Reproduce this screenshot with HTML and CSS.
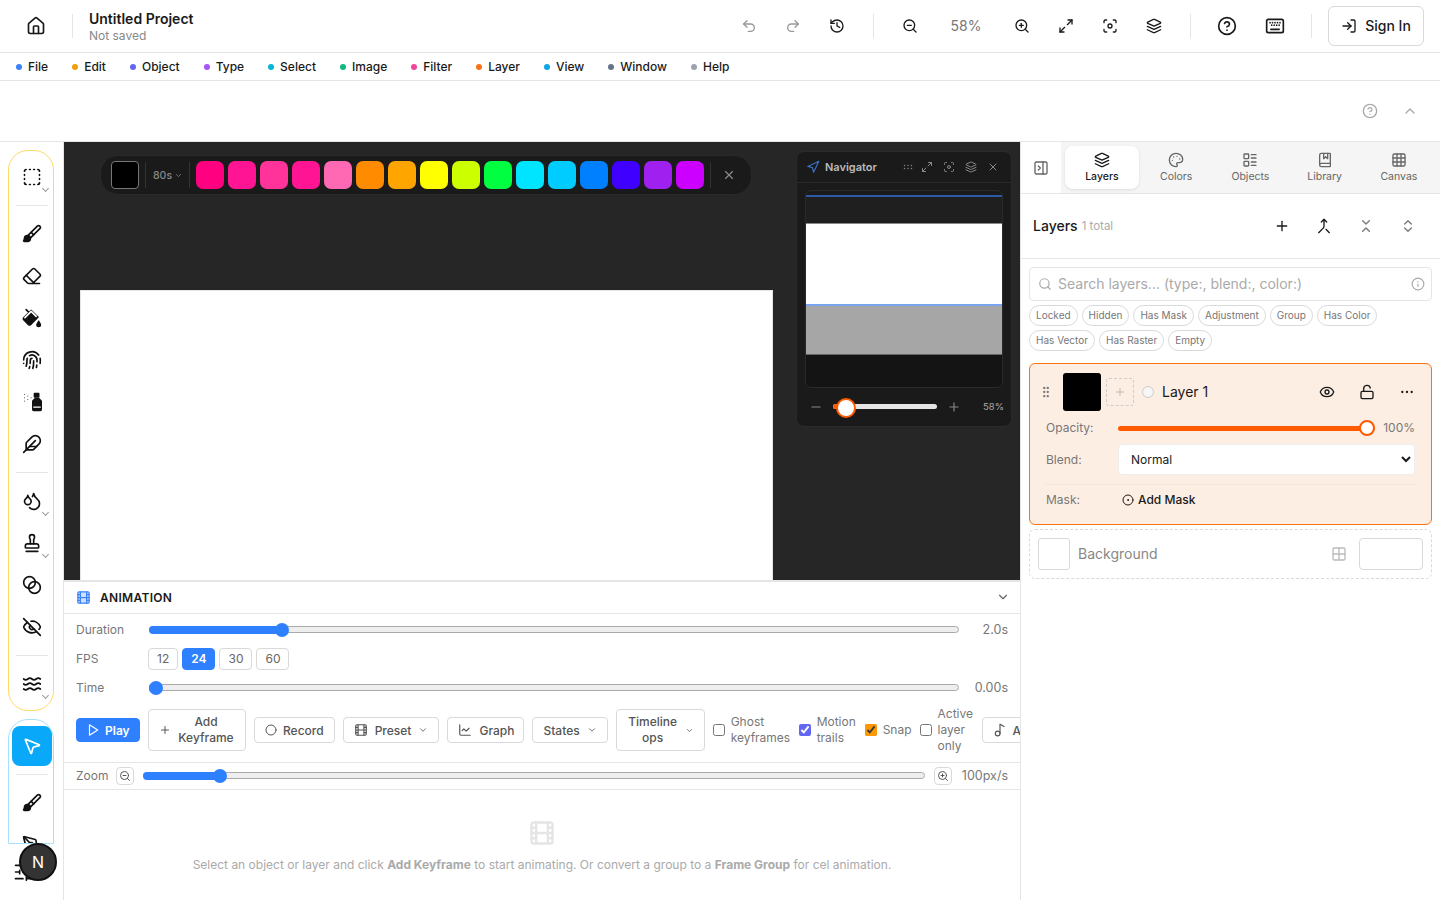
FILE: index.html
```html
<!DOCTYPE html>
<html lang="en">
<head>
    <meta charset="UTF-8">
    <title>Untitled Project</title>
    <link rel="stylesheet" href="styles.css">
</head>
<body>

<!-- icon sprite -->
<svg class="sprite" xmlns="http://www.w3.org/2000/svg">
    <symbol id="home" viewBox="0 0 24 24"><path d="M15 21v-8a1 1 0 0 0-1-1h-4a1 1 0 0 0-1 1v8"/><path d="M3 10a2 2 0 0 1 .709-1.528l7-5.999a2 2 0 0 1 2.582 0l7 5.999A2 2 0 0 1 21 10v9a2 2 0 0 1-2 2H5a2 2 0 0 1-2-2z"/></symbol>
    <symbol id="undo" viewBox="0 0 24 24"><path d="M9 14 4 9l5-5"/><path d="M4 9h10.5a5.5 5.5 0 0 1 0 11H11"/></symbol>
    <symbol id="redo" viewBox="0 0 24 24"><path d="m15 14 5-5-5-5"/><path d="M20 9H9.5a5.5 5.5 0 0 0 0 11H13"/></symbol>
    <symbol id="history" viewBox="0 0 24 24"><path d="M3 12a9 9 0 1 0 9-9 9.75 9.75 0 0 0-6.74 2.74L3 8"/><path d="M3 3v5h5"/><path d="M12 7v5l4 2"/></symbol>
    <symbol id="zoom-out" viewBox="0 0 24 24"><circle cx="11" cy="11" r="8"/><path d="m21 21-4.35-4.35"/><path d="M8 11h6"/></symbol>
    <symbol id="zoom-in" viewBox="0 0 24 24"><circle cx="11" cy="11" r="8"/><path d="m21 21-4.35-4.35"/><path d="M8 11h6"/><path d="M11 8v6"/></symbol>
    <symbol id="expand" viewBox="0 0 24 24"><path d="M15 3h6v6"/><path d="m21 3-7 7"/><path d="m3 21 7-7"/><path d="M9 21H3v-6"/></symbol>
    <symbol id="scan" viewBox="0 0 24 24"><path d="M3 7V5a2 2 0 0 1 2-2h2"/><path d="M17 3h2a2 2 0 0 1 2 2v2"/><path d="M21 17v2a2 2 0 0 1-2 2h-2"/><path d="M7 21H5a2 2 0 0 1-2-2v-2"/><circle cx="12" cy="12" r="3"/></symbol>
    <symbol id="layers" viewBox="0 0 24 24"><path d="m12.83 2.18a2 2 0 0 0-1.66 0L2.6 6.08a1 1 0 0 0 0 1.83l8.58 3.91a2 2 0 0 0 1.66 0l8.58-3.9a1 1 0 0 0 0-1.83Z"/><path d="m22 17.65-9.17 4.16a2 2 0 0 1-1.66 0L2 17.65"/><path d="m22 12.65-9.17 4.16a2 2 0 0 1-1.66 0L2 12.65"/></symbol>
    <symbol id="help" viewBox="0 0 24 24"><circle cx="12" cy="12" r="10"/><path d="M9.09 9a3 3 0 0 1 5.83 1c0 2-3 3-3 3"/><path d="M12 17h.01"/></symbol>
    <symbol id="keyboard" viewBox="0 0 24 24"><rect x="2" y="4" width="20" height="16" rx="2"/><path d="M6 8h.01M9 8h.01M12 8h.01M15 8h.01M18 8h.01M8 11h.01M11 11h.01M14 11h.01M17 11h.01M7 16h10"/></symbol>
    <symbol id="login" viewBox="0 0 24 24"><path d="m10 17 5-5-5-5"/><path d="M15 12H3"/><path d="M15 3h4a2 2 0 0 1 2 2v14a2 2 0 0 1-2 2h-4"/></symbol>
    <symbol id="chev-up" viewBox="0 0 24 24"><path d="m18 15-6-6-6 6"/></symbol>
    <symbol id="chev-down" viewBox="0 0 24 24"><path d="m6 9 6 6 6-6"/></symbol>
    <symbol id="select" viewBox="0 0 24 24"><path d="M5 3a2 2 0 0 0-2 2"/><path d="M19 3a2 2 0 0 1 2 2"/><path d="M21 19a2 2 0 0 1-2 2"/><path d="M5 21a2 2 0 0 1-2-2"/><path d="M9 3h1M9 21h1M14 3h1M14 21h1M3 9v1M21 9v1M3 14v1M21 14v1"/></symbol>
    <symbol id="brush" viewBox="0 0 24 24"><path d="m11 10 3 3"/><path fill="currentColor" d="M6.5 21A3.5 3.5 0 1 0 3 17.5a2.62 2.62 0 0 1-.708 1.792A1 1 0 0 0 3 21z"/><path d="M9.969 17.031 21.378 5.624a1 1 0 0 0-3.002-3.002L6.967 14.031"/></symbol>
    <symbol id="eraser" viewBox="0 0 24 24"><path d="M21 21H8a2 2 0 0 1-1.42-.587l-3.994-3.999a2 2 0 0 1 0-2.828l10-10a2 2 0 0 1 2.829 0l5.999 6a2 2 0 0 1 0 2.828L12.834 21"/><path d="m5.082 11.09 8.828 8.828"/></symbol>
    <symbol id="bucket" viewBox="0 0 24 24"><path fill="currentColor" d="m19 11-8-8-8.6 8.6a2 2 0 0 0 0 2.8l5.2 5.2c.8.8 2 .8 2.8 0L19 11Z"/><path d="m5 2 5 5"/><path stroke="#fff" d="M3.5 11.5 11 4l6 6"/><path fill="currentColor" d="M22 20a2 2 0 1 1-4 0c0-1.6 1.7-2.4 2-4 .3 1.6 2 2.4 2 4Z"/></symbol>
    <symbol id="fingerprint" viewBox="0 0 24 24"><path d="M12 10a2 2 0 0 0-2 2c0 1.02-.1 2.51-.26 4"/><path d="M14 13.12c0 2.38 0 6.38-1 8.88"/><path d="M17.29 21.02c.12-.6.43-2.3.5-3.02"/><path d="M2 12a10 10 0 0 1 18-6"/><path d="M2 16h.01"/><path d="M21.8 16c.2-2 .131-5.354 0-6"/><path d="M5 19.5C5.5 18 6 15 6 12a6 6 0 0 1 .34-2"/><path d="M8.65 22c.21-.66.45-1.32.57-2"/><path d="M9 6.8a6 6 0 0 1 9 5.2v2"/></symbol>
    <symbol id="spray" viewBox="0 0 24 24"><path stroke-width="1" d="M3 3h.01M7 5h.01M11 7h.01M3 7h.01M7 9h.01M3 11h.01"/><rect x="15" y="2" width="5" height="4" fill="currentColor"/><path fill="currentColor" d="m20 8 3 3v10c0 .6-.4 1-1 1h-8c-.6 0-1-.4-1-1V11l3-3z"/><path stroke="#fff" stroke-width="1.5" d="M14 18h8"/></symbol>
    <symbol id="feather" viewBox="0 0 24 24"><path d="M12.67 19a2 2 0 0 0 1.416-.588l6.154-6.172a6 6 0 0 0-8.49-8.49L5.586 9.914A2 2 0 0 0 5 11.328V18a1 1 0 0 0 1 1z"/><path d="M16 8 2 22"/><path d="M17.5 15H9"/></symbol>
    <symbol id="droplets" viewBox="0 0 24 24"><path d="M7 16.3c2.2 0 4-1.83 4-4.05 0-1.16-.57-2.26-1.71-3.19S7.29 6.75 7 5.3c-.29 1.45-1.14 2.84-2.29 3.76S3 11.1 3 12.25c0 2.22 1.8 4.05 4 4.05z"/><path d="M12.56 6.6A10.97 10.97 0 0 0 14 3.02c.5 2.5 2 4.9 4 6.5s3 3.5 3 5.5a6.98 6.98 0 0 1-11.91 4.97"/></symbol>
    <symbol id="stamp" viewBox="0 0 24 24"><path d="M5 22h14"/><path d="M19.27 13.73A2.5 2.5 0 0 0 17.5 13h-11A2.5 2.5 0 0 0 4 15.5V17a1 1 0 0 0 1 1h14a1 1 0 0 0 1-1v-1.5c0-.66-.26-1.3-.73-1.77Z"/><path d="M14 13V8.5C14 7 15 7 15 5a3 3 0 0 0-3-3c-1.66 0-3 1-3 3s1 2 1 3.5V13"/></symbol>
    <symbol id="blend" viewBox="0 0 24 24"><circle cx="9" cy="9" r="7"/><circle cx="15" cy="15" r="7"/></symbol>
    <symbol id="eye-off" viewBox="0 0 24 24"><path d="M10.733 5.076a10.744 10.744 0 0 1 11.205 6.575 1 1 0 0 1 0 .696 10.747 10.747 0 0 1-1.444 2.49"/><path d="M14.084 14.158a3 3 0 0 1-4.242-4.242"/><path d="M17.479 17.499a10.75 10.75 0 0 1-15.417-5.151 1 1 0 0 1 0-.696 10.75 10.75 0 0 1 4.446-5.143"/><path d="m2 2 20 20"/></symbol>
    <symbol id="waves" viewBox="0 0 24 24"><path d="M2 6c.6.5 1.2 1 2.5 1C7 7 7 5 9.5 5c2.6 0 2.4 2 5 2 2.5 0 2.5-2 5-2 1.3 0 1.9.5 2.5 1"/><path d="M2 12c.6.5 1.2 1 2.5 1 2.5 0 2.5-2 5-2 2.6 0 2.4 2 5 2 2.5 0 2.5-2 5-2 1.3 0 1.9.5 2.5 1"/><path d="M2 18c.6.5 1.2 1 2.5 1 2.5 0 2.5-2 5-2 2.6 0 2.4 2 5 2 2.5 0 2.5-2 5-2 1.3 0 1.9.5 2.5 1"/></symbol>
    <symbol id="pointer" viewBox="0 0 24 24"><path d="M4.037 4.688a.495.495 0 0 1 .651-.651l16 6.5a.5.5 0 0 1-.063.947l-6.124 1.58a2 2 0 0 0-1.438 1.435l-1.579 6.126a.5.5 0 0 1-.947.063z"/></symbol>
    <symbol id="pen" viewBox="0 0 24 24"><path d="M15.707 21.293a1 1 0 0 1-1.414 0l-1.586-1.586a1 1 0 0 1 0-1.414l5.586-5.586a1 1 0 0 1 1.414 0l1.586 1.586a1 1 0 0 1 0 1.414z"/><path d="m18 13-1.375-6.874a1 1 0 0 0-.746-.776L3.235 2.028a1 1 0 0 0-1.207 1.207L5.35 15.879a1 1 0 0 0 .776.746L13 18"/><path d="m2.3 2.3 7.286 7.286"/><circle cx="11" cy="11" r="2"/></symbol>
    <symbol id="sliders" viewBox="0 0 24 24"><path d="M21 4h-7M10 4H3M21 12h-9M8 12H3M21 20h-5M12 20H3M14 2v4M8 10v4M16 18v4"/></symbol>
    <symbol id="x" viewBox="0 0 24 24"><path d="M18 6 6 18"/><path d="m6 6 12 12"/></symbol>
    <symbol id="nav" viewBox="0 0 24 24"><polygon points="3 11 22 2 13 21 11 13 3 11"/></symbol>
    <symbol id="grip-h" viewBox="0 0 24 24"><path d="M5 9h.01M12 9h.01M19 9h.01M5 15h.01M12 15h.01M19 15h.01"/></symbol>
    <symbol id="grip-v" viewBox="0 0 24 24"><path d="M9 5h.01M15 5h.01M9 12h.01M15 12h.01M9 19h.01M15 19h.01"/></symbol>
    <symbol id="minus" viewBox="0 0 24 24"><path d="M5 12h14"/></symbol>
    <symbol id="plus" viewBox="0 0 24 24"><path d="M5 12h14"/><path d="M12 5v14"/></symbol>
    <symbol id="panel" viewBox="0 0 24 24"><rect x="3" y="3" width="18" height="18" rx="2"/><path d="M15 3v18"/><path d="m8 9 3 3-3 3"/></symbol>
    <symbol id="palette" viewBox="0 0 24 24"><path d="M12 22a1 1 0 0 1 0-20 10 9 0 0 1 10 9 5 5 0 0 1-5 5h-2.25a1.75 1.75 0 0 0-1.4 2.8l.3.4a1.75 1.75 0 0 1-1.4 2.8z"/><path d="M13.5 6.5h.01M17.5 10.5h.01M6.5 12.5h.01M8.5 7.5h.01"/></symbol>
    <symbol id="objects" viewBox="0 0 24 24"><rect x="3" y="3" width="7" height="7" rx="1"/><rect x="3" y="14" width="7" height="7" rx="1"/><path d="M14 4h7M14 9h7M14 15h7M14 20h7"/></symbol>
    <symbol id="library" viewBox="0 0 24 24"><path d="M10 2v8l3-3 3 3V2"/><path d="M4 19.5v-15A2.5 2.5 0 0 1 6.5 2H19a1 1 0 0 1 1 1v18a1 1 0 0 1-1 1H6.5a1 1 0 0 1 0-5H20"/></symbol>
    <symbol id="grid3" viewBox="0 0 24 24"><rect x="3" y="3" width="18" height="18" rx="2"/><path d="M3 9h18M3 15h18M9 3v18M15 3v18"/></symbol>
    <symbol id="grid2" viewBox="0 0 24 24"><rect x="3" y="3" width="18" height="18" rx="2"/><path d="M12 3v18M3 12h18"/></symbol>
    <symbol id="merge" viewBox="0 0 24 24"><path d="m8 6 4-4 4 4"/><path d="M12 2v10.3a4 4 0 0 1-1.172 2.872L4 22"/><path d="m20 22-5-5"/></symbol>
    <symbol id="collapse" viewBox="0 0 24 24"><path d="m7 20 5-5 5 5"/><path d="m7 4 5 5 5-5"/></symbol>
    <symbol id="updown" viewBox="0 0 24 24"><path d="m7 15 5 5 5-5"/><path d="m7 9 5-5 5 5"/></symbol>
    <symbol id="search" viewBox="0 0 24 24"><circle cx="11" cy="11" r="8"/><path d="m21 21-4.3-4.3"/></symbol>
    <symbol id="info" viewBox="0 0 24 24"><circle cx="12" cy="12" r="10"/><path d="M12 16v-4"/><path d="M12 8h.01"/></symbol>
    <symbol id="eye" viewBox="0 0 24 24"><path d="M2.062 12.348a1 1 0 0 1 0-.696 10.75 10.75 0 0 1 19.876 0 1 1 0 0 1 0 .696 10.75 10.75 0 0 1-19.876 0"/><circle cx="12" cy="12" r="3"/></symbol>
    <symbol id="unlock" viewBox="0 0 24 24"><rect x="3" y="11" width="18" height="11" rx="2"/><path d="M7 11V7a5 5 0 0 1 9.9-1"/></symbol>
    <symbol id="more" viewBox="0 0 24 24"><path d="M5 12h.01M12 12h.01M19 12h.01"/></symbol>
    <symbol id="circle-dot" viewBox="0 0 24 24"><circle cx="12" cy="12" r="10"/><circle cx="12" cy="12" r="1"/></symbol>
    <symbol id="film" viewBox="0 0 24 24"><rect x="3" y="3" width="18" height="18" rx="2"/><path d="M7 3v18M3 7.5h4M3 12h18M3 16.5h4M17 3v18M17 7.5h4M17 16.5h4"/></symbol>
    <symbol id="play" viewBox="0 0 24 24"><polygon points="6 3 20 12 6 21 6 3"/></symbol>
    <symbol id="circle" viewBox="0 0 24 24"><circle cx="12" cy="12" r="10"/></symbol>
    <symbol id="chart" viewBox="0 0 24 24"><path d="M3 3v16a2 2 0 0 0 2 2h16"/><path d="m19 9-5 5-4-4-3 3"/></symbol>
    <symbol id="music" viewBox="0 0 24 24"><circle cx="8" cy="18" r="4"/><path d="M12 18V2l7 4"/></symbol>
</svg>

<header class="topbar">
    <a class="home"><svg class="ic i20"><use href="#home"/></svg></a>
    <div class="sep"></div>
    <div class="project">
        <div class="project-name">Untitled Project</div>
        <div class="project-state">Not saved</div>
    </div>
    <div class="top-actions">
        <button class="top-btn faded"><svg class="ic i16"><use href="#undo"/></svg></button>
        <button class="top-btn faded"><svg class="ic i16"><use href="#redo"/></svg></button>
        <button class="top-btn"><svg class="ic i16"><use href="#history"/></svg></button>
        <div class="sep wide"></div>
        <button class="top-btn"><svg class="ic i16"><use href="#zoom-out"/></svg></button>
        <span class="zoom-value">58%</span>
        <button class="top-btn"><svg class="ic i16"><use href="#zoom-in"/></svg></button>
        <button class="top-btn"><svg class="ic i16"><use href="#expand"/></svg></button>
        <button class="top-btn"><svg class="ic i16"><use href="#scan"/></svg></button>
        <button class="top-btn"><svg class="ic i16"><use href="#layers"/></svg></button>
        <div class="sep wide"></div>
        <button class="top-btn"><svg class="ic i20"><use href="#help"/></svg></button>
        <button class="top-btn kbd"><svg class="ic i20"><use href="#keyboard"/></svg></button>
        <div class="sep wide"></div>
        <button class="sign-in"><svg class="ic i16"><use href="#login"/></svg>Sign In</button>
    </div>
</header>

<nav class="menubar">
    <a class="menu-item"><i style="background:#3b82f6"></i>File</a>
    <a class="menu-item"><i style="background:#f59e0b"></i>Edit</a>
    <a class="menu-item"><i style="background:#6366f1"></i>Object</a>
    <a class="menu-item"><i style="background:#a855f7"></i>Type</a>
    <a class="menu-item"><i style="background:#06b6d4"></i>Select</a>
    <a class="menu-item"><i style="background:#10b981"></i>Image</a>
    <a class="menu-item"><i style="background:#ec4899"></i>Filter</a>
    <a class="menu-item"><i style="background:#f97316"></i>Layer</a>
    <a class="menu-item"><i style="background:#0ea5e9"></i>View</a>
    <a class="menu-item"><i style="background:#64748b"></i>Window</a>
    <a class="menu-item"><i style="background:#9ca3af"></i>Help</a>
</nav>

<div class="subbar">
    <svg class="ic i16"><use href="#help"/></svg>
    <svg class="ic i16"><use href="#chev-up"/></svg>
</div>

<div class="workspace">
    <aside class="rail">
        <div class="tool-card yellow">
            <button class="tool more-tools"><svg class="ic i20"><use href="#select"/></svg></button>
            <div class="tool-sep"></div>
            <button class="tool"><svg class="ic i20"><use href="#brush"/></svg></button>
            <button class="tool"><svg class="ic i20"><use href="#eraser"/></svg></button>
            <button class="tool"><svg class="ic i20"><use href="#bucket"/></svg></button>
            <button class="tool"><svg class="ic i20"><use href="#fingerprint"/></svg></button>
            <button class="tool"><svg class="ic i20"><use href="#spray"/></svg></button>
            <button class="tool"><svg class="ic i20"><use href="#feather"/></svg></button>
            <div class="tool-sep"></div>
            <button class="tool more-tools"><svg class="ic i20"><use href="#droplets"/></svg></button>
            <button class="tool more-tools"><svg class="ic i20"><use href="#stamp"/></svg></button>
            <button class="tool"><svg class="ic i20"><use href="#blend"/></svg></button>
            <button class="tool"><svg class="ic i20"><use href="#eye-off"/></svg></button>
            <div class="tool-sep"></div>
            <button class="tool more-tools"><svg class="ic i20"><use href="#waves"/></svg></button>
        </div>
        <div class="tool-card blue">
            <button class="tool active"><svg class="ic i20"><use href="#pointer"/></svg></button>
            <div class="tool-sep"></div>
            <button class="tool"><svg class="ic i20"><use href="#brush"/></svg></button>
            <button class="tool"><svg class="ic i20"><use href="#pen"/></svg></button>
        </div>
        <div class="rail-foot"><svg class="ic i20"><use href="#sliders"/></svg></div>
        <div class="badge">N</div>
    </aside>

    <main class="center">
        <section class="canvas">
            <div class="sheet"></div>

            <div class="palette">
                <div class="swatch-current"></div>
                <div class="pal-sep"></div>
                <div class="pal-name">80s <svg class="ic i9"><use href="#chev-down"/></svg></div>
                <div class="pal-sep"></div>
                <div class="swatches">
                    <span style="background:#ff0080"></span>
                    <span style="background:#ff1493"></span>
                    <span style="background:#ff3399"></span>
                    <span style="background:#ff1493"></span>
                    <span style="background:#ff69b4"></span>
                    <span style="background:#ff8c00"></span>
                    <span style="background:#ffa500"></span>
                    <span style="background:#ffff00"></span>
                    <span style="background:#ccff00"></span>
                    <span style="background:#00ff41"></span>
                    <span style="background:#00e5ff"></span>
                    <span style="background:#00ccff"></span>
                    <span style="background:#0080ff"></span>
                    <span style="background:#4000ff"></span>
                    <span style="background:#a020f0"></span>
                    <span style="background:#cc00ff"></span>
                </div>
                <div class="pal-sep"></div>
                <svg class="ic i14 pal-close"><use href="#x"/></svg>
            </div>

            <div class="navigator">
                <div class="nav-head">
                    <svg class="ic i14 nav-icon"><use href="#nav"/></svg>
                    <span class="nav-title">Navigator</span>
                    <svg class="ic i12 nav-first"><use href="#grip-h"/></svg>
                    <svg class="ic i12"><use href="#expand"/></svg>
                    <svg class="ic i12"><use href="#scan"/></svg>
                    <svg class="ic i12"><use href="#layers"/></svg>
                    <svg class="ic i12"><use href="#x"/></svg>
                </div>
                <div class="nav-preview">
                    <div class="pv-top"></div>
                    <div class="pv-white"></div>
                    <div class="pv-gray"></div>
                    <div class="pv-bottom"></div>
                </div>
                <div class="nav-foot">
                    <svg class="ic i14"><use href="#minus"/></svg>
                    <div class="nav-slider"><div class="nav-fill"></div></div>
                    <svg class="ic i14"><use href="#plus"/></svg>
                    <span class="nav-pct">58%</span>
                </div>
            </div>
        </section>

        <section class="animation">
            <div class="anim-head">
                <svg class="ic i14 film-blue"><use href="#film"/></svg>
                <span class="anim-title">ANIMATION</span>
                <svg class="ic i14 anim-chev"><use href="#chev-down"/></svg>
            </div>
            <div class="anim-rows">
                <div class="anim-row">
                    <label>Duration</label>
                    <div class="slider"><div class="fill" style="width:16.4%"></div></div>
                    <span class="value">2.0s</span>
                </div>
                <div class="anim-row">
                    <label>FPS</label>
                    <div class="fps">
                        <button>12</button>
                        <button class="on">24</button>
                        <button>30</button>
                        <button>60</button>
                    </div>
                </div>
                <div class="anim-row">
                    <label>Time</label>
                    <div class="slider"><div class="fill" style="width:0.9%"></div></div>
                    <span class="value">0.00s</span>
                </div>
            </div>
            <div class="anim-tools">
                <button class="btn play"><svg class="ic i14"><use href="#play"/></svg>Play</button>
                <button class="btn tall key"><svg class="ic i12"><use href="#plus"/></svg><span>Add Keyframe</span></button>
                <button class="btn"><svg class="ic i12"><use href="#circle"/></svg>Record</button>
                <button class="btn gap7"><svg class="ic i14"><use href="#film"/></svg>Preset<svg class="ic i10"><use href="#chev-down"/></svg></button>
                <button class="btn gap7 graph"><svg class="ic i14"><use href="#chart"/></svg>Graph</button>
                <button class="btn gap7">States<svg class="ic i10"><use href="#chev-down"/></svg></button>
                <button class="btn tall ops"><span>Timeline ops</span><svg class="ic i9"><use href="#chev-down"/></svg></button>
                <label class="check w-ghost"><input type="checkbox"><span>Ghost keyframes</span></label>
                <label class="check w-motion"><input type="checkbox" class="violet" checked><span>Motion trails</span></label>
                <label class="check"><input type="checkbox" class="amber" checked><span>Snap</span></label>
                <label class="check w-active"><input type="checkbox"><span>Active layer only</span></label>
                <button class="btn"><svg class="ic i14"><use href="#music"/></svg>Audio</button>
            </div>
            <div class="anim-zoom">
                <label>Zoom</label>
                <button class="zoom-btn"><svg class="ic i12"><use href="#zoom-out"/></svg></button>
                <div class="slider"><div class="fill" style="width:9.9%"></div></div>
                <button class="zoom-btn"><svg class="ic i12"><use href="#zoom-in"/></svg></button>
                <span class="value">100px/s</span>
            </div>
            <div class="anim-empty">
                <svg class="ic i28"><use href="#film"/></svg>
                <p>Select an object or layer and click <strong>Add Keyframe</strong> to start animating. Or convert a group to a <strong>Frame Group</strong> for cel animation.</p>
            </div>
        </section>
    </main>

    <aside class="panel">
        <div class="tabs">
            <button class="tab-toggle"><svg class="ic i16"><use href="#panel"/></svg></button>
            <div class="tab-list">
                <button class="tab on"><svg class="ic i16"><use href="#layers"/></svg>Layers</button>
                <button class="tab"><svg class="ic i16"><use href="#palette"/></svg>Colors</button>
                <button class="tab"><svg class="ic i16"><use href="#objects"/></svg>Objects</button>
                <button class="tab"><svg class="ic i16"><use href="#library"/></svg>Library</button>
                <button class="tab"><svg class="ic i16"><use href="#grid3"/></svg>Canvas</button>
            </div>
        </div>

        <div class="layers-head">
            <span class="layers-title">Layers</span>
            <span class="layers-count">1 total</span>
            <div class="layers-actions">
                <svg class="ic i16"><use href="#plus"/></svg>
                <svg class="ic i16"><use href="#merge"/></svg>
                <svg class="ic i16 dim"><use href="#collapse"/></svg>
                <svg class="ic i16 dim"><use href="#updown"/></svg>
            </div>
        </div>

        <div class="layers-body">
            <div class="search">
                <svg class="ic i14"><use href="#search"/></svg>
                <span>Search layers... (type:, blend:, color:)</span>
                <svg class="ic i14 search-info"><use href="#info"/></svg>
            </div>
            <div class="chips">
                <span>Locked</span><span>Hidden</span><span>Has Mask</span><span>Adjustment</span><span>Group</span><span>Has Color</span>
                <span>Has Vector</span><span>Has Raster</span><span>Empty</span>
            </div>

            <div class="layer-card">
                <div class="layer-top">
                    <svg class="ic i14 grip"><use href="#grip-v"/></svg>
                    <div class="layer-thumb"></div>
                    <div class="mask-slot"><svg class="ic i12"><use href="#plus"/></svg></div>
                    <div class="layer-radio"></div>
                    <span class="layer-name">Layer 1</span>
                    <div class="layer-actions">
                        <svg class="ic i16"><use href="#eye"/></svg>
                        <svg class="ic i16"><use href="#unlock"/></svg>
                        <svg class="ic i16 dots"><use href="#more"/></svg>
                    </div>
                </div>
                <div class="layer-row op-row">
                    <label>Opacity:</label>
                    <div class="op-slider"><div class="op-fill"></div></div>
                    <span class="op-value">100%</span>
                </div>
                <div class="layer-row blend-row">
                    <label>Blend:</label>
                    <select><option>Normal</option></select>
                </div>
                <div class="layer-row mask-row">
                    <label>Mask:</label>
                    <a class="add-mask"><svg class="ic i12"><use href="#circle-dot"/></svg>Add Mask</a>
                </div>
            </div>

            <div class="bg-row">
                <div class="bg-thumb"></div>
                <span class="bg-name">Background</span>
                <svg class="ic i16"><use href="#grid2"/></svg>
                <div class="bg-color"></div>
            </div>
        </div>
    </aside>
</div>

</body>
</html>
```

FILE: styles.css
```css
/* General */
* {
    box-sizing: border-box;
}

html, body {
    height: 100%;
}

body {
    margin: 0;
    font-family: 'Inter', 'Liberation Sans', sans-serif;
    color: #1a1a1a;
    background: #fff;
    display: flex;
    flex-direction: column;
    overflow: hidden;
}

button {
    font: inherit;
    color: inherit;
    background: none;
    border: none;
    padding: 0;
    cursor: pointer;
}

.sprite {
    display: none;
}

.ic {
    fill: none;
    stroke: currentColor;
    stroke-width: 2;
    stroke-linecap: round;
    stroke-linejoin: round;
    flex-shrink: 0;
}

.i9 { width: 9px; height: 9px; }
.i10 { width: 10px; height: 10px; }
.i12 { width: 12px; height: 12px; }
.i14 { width: 14px; height: 14px; }
.i16 { width: 16px; height: 16px; }
.i20 { width: 20px; height: 20px; }
.i28 { width: 28px; height: 28px; }

/* Top bar */
.topbar {
    height: 53px;
    flex-shrink: 0;
    display: flex;
    align-items: center;
    border-bottom: 1px solid #e5e5e5;
}

.home {
    width: 72px;
    display: flex;
    justify-content: center;
}

.sep {
    width: 1px;
    height: 24px;
    background: #e5e5e5;
    flex-shrink: 0;
}

.sep.wide {
    margin: 0 14px;
}

.project {
    margin-left: 16px;
}

.project-name {
    font-size: 14px;
    font-weight: 600;
    line-height: 19px;
}

.project-state {
    font-size: 12px;
    line-height: 15px;
    color: #888;
}

.top-actions {
    margin-left: auto;
    margin-bottom: 1px;
    padding-right: 16px;
    display: flex;
    align-items: center;
}

.top-btn {
    width: 44px;
    height: 32px;
    display: flex;
    align-items: center;
    justify-content: center;
}

.top-btn.faded {
    color: #999;
}

.top-btn.kbd {
    margin-left: 4px;
}

.zoom-value {
    width: 68px;
    text-align: center;
    font-size: 14px;
    color: #777;
}

.sign-in {
    margin-left: 2px;
    width: 96px;
    height: 40px;
    border: 1px solid #d9d9d9;
    border-radius: 6px;
    display: flex;
    align-items: center;
    justify-content: center;
    gap: 8px;
    font-size: 14px;
    font-weight: 500;
}

/* Menu bar */
.menubar {
    height: 28px;
    flex-shrink: 0;
    display: flex;
    align-items: center;
    gap: 24px;
    padding-left: 16px;
    border-bottom: 1px solid #e5e5e5;
}

.menu-item {
    display: flex;
    align-items: center;
    gap: 6px;
    font-size: 12px;
    font-weight: 500;
}

.menu-item i {
    width: 6px;
    height: 6px;
    border-radius: 50%;
}

.subbar {
    height: 61px;
    flex-shrink: 0;
    display: flex;
    align-items: center;
    justify-content: flex-end;
    gap: 24px;
    padding-right: 22px;
    color: #aaa;
    border-bottom: 1px solid #e5e5e5;
}

.workspace {
    flex: 1;
    display: flex;
    min-height: 0;
}

/* Left tool rail */
.rail {
    width: 64px;
    flex-shrink: 0;
    padding: 8px 0 0 8px;
    border-right: 1px solid #e5e5e5;
    position: relative;
}

.tool-card {
    width: 46px;
    padding: 6px 0 6px 2px;
    border: 1px solid;
    border-radius: 20px;
    display: flex;
    flex-direction: column;
    align-items: center;
    gap: 2px;
}

.tool-card.yellow {
    border-color: #ffd966;
    margin-bottom: 8px;
}

.tool-card.blue {
    height: 125px;
    overflow: hidden;
    border-color: #a6e0ff;
    border-radius: 20px 20px 0 0;
}

.tool {
    width: 40px;
    height: 40px;
    flex-shrink: 0;
    border-radius: 8px;
    display: flex;
    align-items: center;
    justify-content: center;
    color: #111;
    position: relative;
}

.tool.active {
    background: #0aa8f8;
    color: #fff;
}

.more-tools::after {
    content: "";
    position: absolute;
    right: 4px;
    bottom: 6px;
    width: 4px;
    height: 4px;
    border-right: 1px solid #999;
    border-bottom: 1px solid #999;
    transform: rotate(45deg);
}

.tool-sep {
    width: 32px;
    height: 1px;
    background: #e5e5e5;
    margin: 6px 0;
    flex-shrink: 0;
}

.rail-foot {
    margin: 18px 0 0 5px;
    color: #111;
}

.badge {
    position: absolute;
    left: 19px;
    top: 701px;
    width: 38px;
    height: 38px;
    border-radius: 50%;
    background: #333;
    border: 2px solid #111;
    color: #fff;
    font-size: 16px;
    display: flex;
    align-items: center;
    justify-content: center;
}

/* Canvas area */
.center {
    width: 956px;
    flex-shrink: 0;
    display: flex;
    flex-direction: column;
    min-height: 0;
}

.canvas {
    height: 438px;
    flex-shrink: 0;
    background: #262626;
    position: relative;
    overflow: hidden;
}

.sheet {
    position: absolute;
    left: 16px;
    top: 148px;
    width: 693px;
    height: 400px;
    background: #fff;
    border: 1px solid #e5e5e5;
}

.palette {
    position: absolute;
    left: 36px;
    top: 13px;
    width: 652px;
    height: 40px;
    padding-left: 10px;
    background: #1a1a1a;
    border: 1px solid #2a2a2a;
    border-radius: 18px;
    display: flex;
    align-items: center;
}

.swatch-current {
    width: 28px;
    height: 28px;
    border: 1px solid #777;
    border-radius: 4px;
    background: #000;
}

.pal-sep {
    width: 1px;
    height: 26px;
    background: #333;
    margin: 0 6px;
}

.pal-name {
    width: 31px;
    padding-left: 1px;
    font-size: 10.5px;
    font-weight: 500;
    color: #888;
    display: flex;
    align-items: center;
    gap: 2px;
}

.swatches {
    display: flex;
    gap: 4px;
}

.swatches span {
    width: 28px;
    height: 28px;
    border-radius: 7px;
}

.pal-close {
    margin-left: 5px;
    color: #888;
}

.navigator {
    position: absolute;
    left: 732px;
    top: 9px;
    width: 216px;
    height: 276px;
    background: #1a1a1a;
    border: 1px solid #2a2a2a;
    border-radius: 8px;
}

.nav-head {
    height: 31px;
    padding: 0 12px 0 9px;
    display: flex;
    align-items: center;
    gap: 10px;
    color: #888;
    border-bottom: 1px solid #2a2a2a;
}

.nav-icon {
    color: #3b6fc4;
    margin-right: -5px;
}

.nav-title {
    font-size: 11px;
    font-weight: 600;
    color: #bbb;
    margin-right: auto;
}

.nav-first {
    margin-right: -3px;
    stroke-width: 3;
}

.nav-preview {
    margin: 7px 8px 0;
    height: 198px;
    border: 1px solid #2a2a2a;
    border-radius: 6px;
    overflow: hidden;
    display: flex;
    flex-direction: column;
}

.pv-top {
    height: 29px;
    margin-top: 4px;
    background: #1f1f1f;
    border-top: 2px solid #2d5aa8;
    border-bottom: 1px solid #888;
}

.pv-white {
    height: 82px;
    background: #fff;
    border-bottom: 2px solid #7aa5ee;
}

.pv-gray {
    height: 49px;
    background: #a6a6a6;
    border-bottom: 1px solid #666;
}

.pv-bottom {
    flex: 1;
    background: #141414;
}

.nav-foot {
    height: 37px;
    padding: 0 7px 0 12px;
    display: flex;
    align-items: center;
    color: #888;
}

.nav-slider {
    width: 104px;
    height: 5px;
    margin: 0 10px;
    background: #e5e5e5;
    border-radius: 3px;
    position: relative;
}

.nav-fill {
    width: 15px;
    height: 5px;
    border-radius: 3px;
    background: #ff5a00;
    position: relative;
}

.nav-fill::after {
    content: "";
    position: absolute;
    right: -8px;
    top: -6px;
    width: 16px;
    height: 16px;
    border-radius: 50%;
    background: #fff;
    border: 2px solid #ff5a00;
}

.nav-pct {
    margin-left: auto;
    font-size: 9.5px;
    color: #aaa;
}

/* Animation panel */
.animation {
    flex: 1;
    min-height: 0;
    border-top: 2px solid #e5e5e5;
    overflow: hidden;
    display: flex;
    flex-direction: column;
}

.anim-head {
    height: 32px;
    flex-shrink: 0;
    padding: 0 10px 1px 12px;
    display: flex;
    align-items: center;
    gap: 9px;
    border-bottom: 1px solid #e5e5e5;
}

.film-blue {
    width: 15px;
    height: 15px;
    color: #3b82f6;
    fill: #cfe0ff;
}

.anim-title {
    font-size: 12px;
    font-weight: 600;
    letter-spacing: 0.3px;
}

.anim-chev {
    margin-left: auto;
    color: #666;
}

.anim-rows {
    padding: 1px 12px 0;
    flex-shrink: 0;
}

.anim-row {
    height: 29px;
    display: flex;
    align-items: center;
}

label {
    font-size: 12px;
    color: #777;
}

.anim-row label {
    width: 72px;
    flex-shrink: 0;
}

.slider {
    flex: 1;
    height: 7px;
    background: #eee;
    border: 1px solid #aaa;
    border-radius: 4px;
    margin-left: 1px;
}

.fill {
    height: 8px;
    margin: -1px 0 0 -1px;
    border-radius: 4px;
    background: #2f80ff;
    position: relative;
}

.fill::after {
    content: "";
    position: absolute;
    right: -7px;
    top: -3px;
    width: 14px;
    height: 14px;
    border-radius: 50%;
    background: #2f80ff;
}

.value {
    width: 49px;
    text-align: right;
    font-size: 12.5px;
    color: #777;
    flex-shrink: 0;
}

.fps {
    display: flex;
    gap: 4px;
}

.fps button {
    height: 22px;
    min-width: 30px;
    padding: 0 8px;
    border: 1px solid #d9d9d9;
    border-radius: 4px;
    font-size: 12px;
    color: #666;
}

.fps button.on {
    background: #2f80ff;
    border-color: #2f80ff;
    color: #fff;
    font-weight: 600;
}

.anim-tools {
    flex-shrink: 0;
    height: 61px;
    padding: 3px 0 7px 12px;
    display: flex;
    align-items: center;
    gap: 8px;
    border-bottom: 1px solid #e5e5e5;
}

.btn {
    height: 26px;
    padding: 0 10px;
    flex-shrink: 0;
    border: 1px solid #d9d9d9;
    border-radius: 4px;
    font-size: 12px;
    font-weight: 500;
    color: #555;
    white-space: nowrap;
    display: flex;
    align-items: center;
    gap: 6px;
}

.btn.gap7 {
    gap: 7px;
}

.btn.graph {
    padding-right: 9px;
}

.btn.play {
    width: 64px;
    height: 24px;
    padding: 0 9px;
    gap: 5px;
    background: #2f80ff;
    border-color: #2f80ff;
    color: #fff;
    font-weight: 600;
}

.btn.tall {
    height: 42px;
    white-space: normal;
    line-height: 16px;
}

.btn.key {
    width: 98px;
}

.btn.ops {
    width: 89px;
}

.btn.tall span {
    flex: 1;
    text-align: center;
}

.check {
    display: flex;
    align-items: center;
    gap: 6px;
    flex-shrink: 0;
    line-height: 16px;
}

.check input {
    width: 12px;
    height: 12px;
    margin: 0;
    flex-shrink: 0;
}

input.violet {
    accent-color: #6366f1;
}

input.amber {
    accent-color: #ff9800;
}

.w-ghost { width: 78px; }
.w-motion { width: 58px; }
.w-active { width: 54px; }

.anim-zoom {
    height: 27px;
    flex-shrink: 0;
    padding: 0 12px 1px;
    display: flex;
    align-items: center;
    border-bottom: 1px solid #e5e5e5;
}

.anim-zoom label {
    width: 40px;
}

.anim-zoom .slider {
    margin: 0 9px;
}

.zoom-btn {
    width: 18px;
    height: 18px;
    flex-shrink: 0;
    border: 1px solid #d9d9d9;
    border-radius: 4px;
    color: #555;
    display: flex;
    align-items: center;
    justify-content: center;
}

.anim-zoom .value {
    width: 56px;
}

.anim-empty {
    flex: 1;
    padding-top: 29px;
    text-align: center;
    color: #e5e5e5;
}

.anim-empty p {
    margin: 5px 0 0;
    font-size: 12px;
    line-height: 18px;
    color: #aaa;
}

/* Right panel */
.panel {
    flex: 1;
    min-width: 0;
    border-left: 1px solid #e5e5e5;
}

.tabs {
    height: 52px;
    display: flex;
    border-bottom: 1px solid #e5e5e5;
}

.tab-toggle {
    width: 40px;
    color: #666;
    display: flex;
    align-items: center;
    justify-content: center;
}

.tab-list {
    flex: 1;
    padding: 4px;
    display: flex;
    background: #f5f5f5;
}

.tab {
    width: 74.25px;
    font-size: 10.5px;
    color: #666;
    display: flex;
    flex-direction: column;
    align-items: center;
    justify-content: center;
    gap: 2px;
}

.tab.on {
    background: #fff;
    color: #1a1a1a;
    font-weight: 500;
    border-radius: 8px;
    box-shadow: 0 1px 3px rgba(0, 0, 0, 0.1);
}

.layers-head {
    height: 65px;
    padding: 0 12px;
    display: flex;
    align-items: center;
    gap: 4px;
    border-bottom: 1px solid #e5e5e5;
}

.layers-title {
    font-size: 14px;
    font-weight: 500;
    margin-bottom: 1px;
}

.layers-count {
    font-size: 11.5px;
    color: #aaa;
}

.layers-actions {
    margin-left: auto;
    margin-right: 12px;
    display: flex;
    gap: 26px;
}

.dim {
    color: #777;
}

.layers-body {
    padding: 8px;
}

.search {
    height: 34px;
    padding: 0 6px 1px 8px;
    border: 1px solid #e5e5e5;
    border-radius: 4px;
    display: flex;
    align-items: center;
    gap: 6px;
    font-size: 14px;
    color: #aaa;
}

.search-info {
    margin-left: auto;
}

.chips {
    margin-top: 4px;
    display: flex;
    flex-wrap: wrap;
    gap: 4px;
}

.chips span {
    height: 21px;
    padding: 0 6px;
    border: 1px solid #d9d9d9;
    border-radius: 11px;
    font-size: 10px;
    line-height: 19px;
    color: #777;
}

.layer-card {
    margin-top: 12px;
    height: 162px;
    padding: 9px 16px 0;
    background: #fdeee4;
    border: 1px solid #f97316;
    border-radius: 6px;
}

.layer-top {
    display: flex;
    align-items: center;
    height: 38px;
    margin-left: -7px;
}

.grip {
    color: #777;
    margin-right: 10px;
    stroke-width: 4;
}

.layer-thumb {
    width: 38px;
    height: 38px;
    background: #000;
    border-radius: 3px;
}

.mask-slot {
    width: 28px;
    height: 28px;
    margin: 0 8px 0 5px;
    border: 1px dashed #ccc;
    border-radius: 3px;
    color: #bbb;
    display: flex;
    align-items: center;
    justify-content: center;
}

.layer-radio {
    width: 12px;
    height: 12px;
    border: 1px solid #ccc;
    border-radius: 50%;
    background: #f7f7f7;
    margin-right: 8px;
}

.layer-name {
    font-size: 14px;
    margin-bottom: 2px;
}

.layer-actions {
    margin-left: auto;
    display: flex;
    gap: 24px;
}

.dots {
    stroke-width: 3.5;
}

.layer-row {
    display: flex;
    align-items: center;
}

.layer-row label {
    width: 72px;
    flex-shrink: 0;
}

.op-row {
    height: 33px;
}

.op-slider {
    width: 257px;
    height: 5px;
    margin-top: 2px;
    background: #ff5a00;
    border-radius: 3px;
    position: relative;
}

.op-fill {
    position: absolute;
    right: 0;
    top: -6px;
    width: 16px;
    height: 16px;
    border-radius: 50%;
    background: #fff;
    border: 2px solid #ff5a00;
}

.op-value {
    margin-left: auto;
    font-size: 12px;
    color: #777;
}

.blend-row {
    height: 31px;
}

select {
    flex: 1;
    height: 31px;
    padding-left: 8px;
    font: inherit;
    font-size: 12px;
    color: #1a1a1a;
    background: #fff;
    border: 1px solid #eee;
    border-radius: 4px;
}

.mask-row {
    margin-top: 9px;
    height: 30px;
    border-top: 1px solid #f7e4d8;
}

.add-mask {
    margin-left: 4px;
    display: flex;
    align-items: center;
    gap: 4px;
    font-size: 12px;
    font-weight: 500;
}

.bg-row {
    margin-top: 4px;
    height: 50px;
    padding: 0 8px;
    border: 1px dashed #d9d9d9;
    border-radius: 6px;
    display: flex;
    align-items: center;
    font-size: 14px;
    color: #888;
}

.bg-thumb {
    width: 32px;
    height: 32px;
    border: 1px solid #d9d9d9;
    border-radius: 3px;
    margin-right: 8px;
}

.bg-name {
    margin-bottom: 2px;
}

.bg-row .ic {
    margin-left: auto;
    color: #bbb;
}

.bg-color {
    width: 64px;
    height: 32px;
    margin-left: 12px;
    border: 1px solid #d9d9d9;
    border-radius: 4px;
}
```
